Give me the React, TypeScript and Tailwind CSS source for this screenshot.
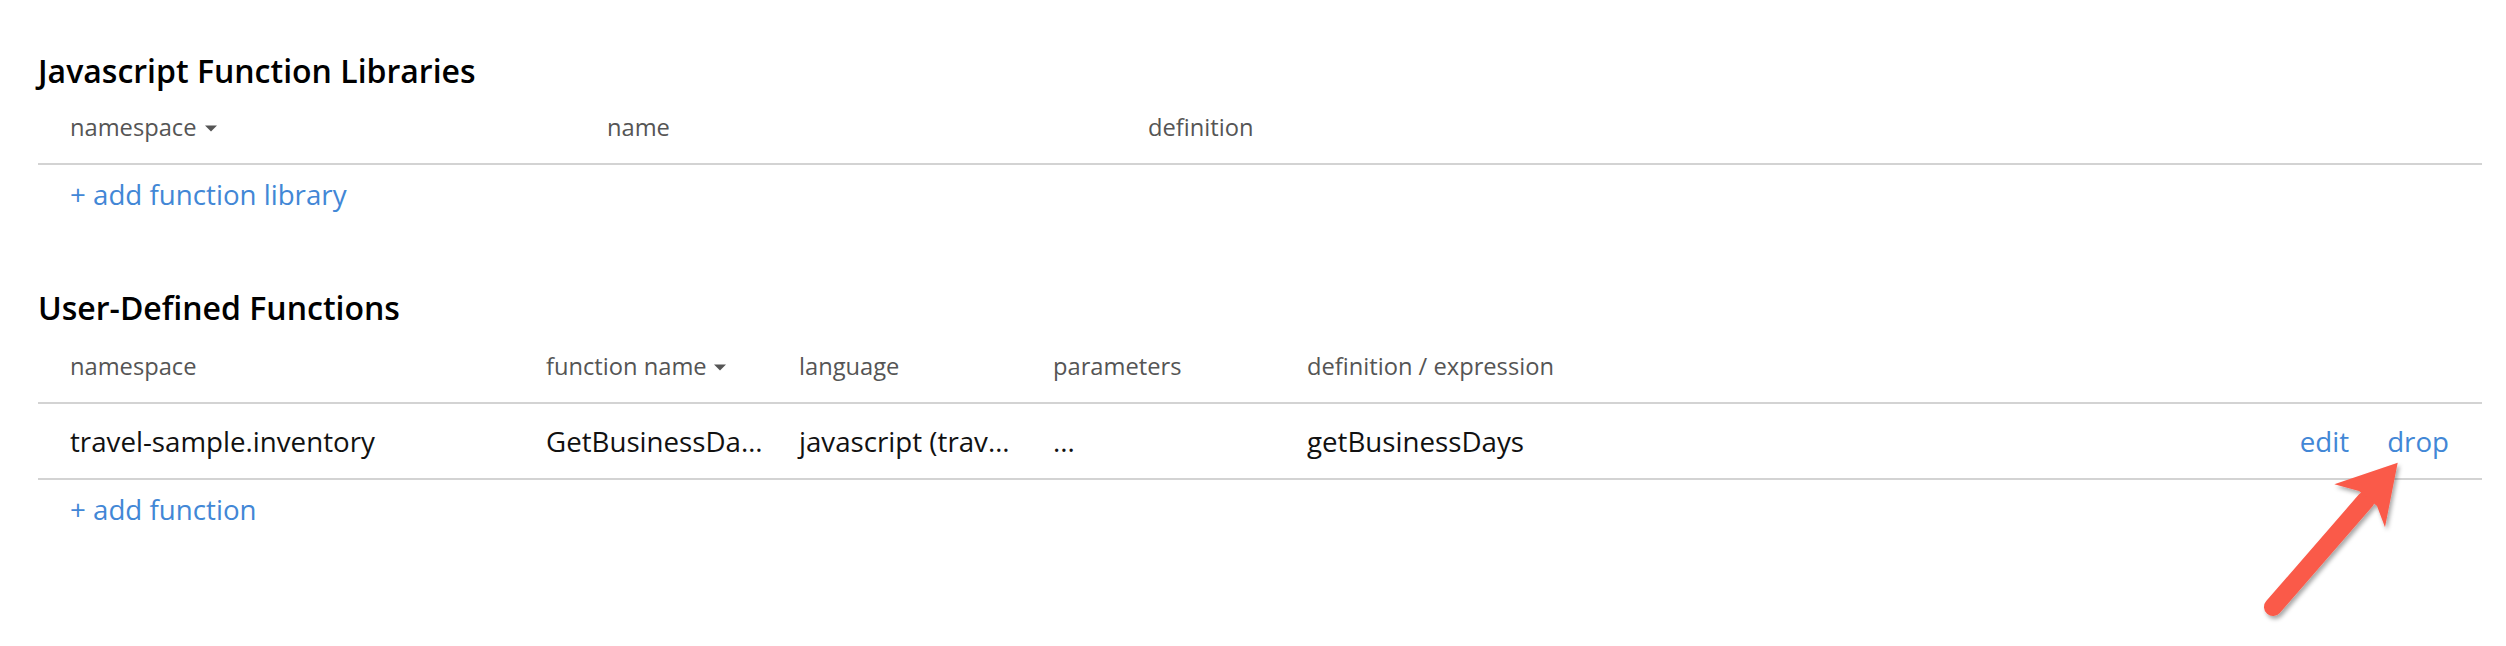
import React from "react";

const LINK = "text-[#4287d6] hover:underline cursor-pointer";

function SortCaret({ className = "" }: { className?: string }) {
  return (
    <svg width="12" height="7" viewBox="0 0 12 7" className={"shrink-0 " + className}>
      <path d="M0 0.5h12L6 6.5z" fill="#555" />
    </svg>
  );
}

function HeaderCell({ children, sorted }: { children: React.ReactNode; sorted?: boolean }) {
  return (
    <div className="flex items-center h-[32px] pl-[32px] min-w-0">
      <span className="whitespace-nowrap">{children}</span>
      {sorted && <SortCaret className="ml-[8px]" />}
    </div>
  );
}

function Cell({ children }: { children: React.ReactNode }) {
  return <div className="pl-[32px] pr-[2px] pt-[18px] truncate min-w-0">{children}</div>;
}

function DropArrow() {
  // red annotation arrow pointing at "drop"
  return (
    <svg
      width="180"
      height="180"
      viewBox="0 0 180 180"
      className="absolute left-[2240px] top-[450px] pointer-events-none"
    >
      <defs>
        <filter id="arrowShadow" x="-20%" y="-20%" width="140%" height="140%">
          <feDropShadow dx="2" dy="3" stdDeviation="2" floodColor="#000" floodOpacity="0.35" />
        </filter>
      </defs>
      <g filter="url(#arrowShadow)" fill="#fa5a4a" stroke="#fa5a4a">
        <line x1="33" y1="157" x2="126" y2="50" strokeWidth="18" strokeLinecap="round" />
        <path d="M157.7 12.7 L94.3 34.3 L119 41 L137 56 L145 77.3 Z" strokeWidth="0" />
      </g>
    </svg>
  );
}

export default function App() {
  return (
    <div className="relative min-h-[646px] w-full bg-white font-['Open_Sans',sans-serif] pl-[38px] pr-[24px] pt-[49px]">
      {/* Javascript Function Libraries */}
      <section>
        <h2 className="text-[32px] leading-[44px] font-semibold text-black">Javascript Function Libraries</h2>
        <div className="mt-[19px] grid grid-cols-[537px_541px_1fr] h-[53px] border-b-2 border-[#d3d3d3] text-[23.7px] text-[#555]">
          <HeaderCell sorted>namespace</HeaderCell>
          <HeaderCell>name</HeaderCell>
          <HeaderCell>definition</HeaderCell>
        </div>
        <div className="mt-[10px] pl-[32px] text-[27.7px] leading-[38px]">
          <span className={LINK}>+ add function library</span>
        </div>
      </section>

      {/* User-Defined Functions */}
      <section className="mt-[73px]">
        <h2 className="text-[32px] leading-[44px] font-semibold text-black">User-Defined Functions</h2>
        <div className="mt-[21px] grid grid-cols-[476px_253px_254px_254px_1fr] h-[53px] border-b-2 border-[#d3d3d3] text-[23.7px] text-[#555]">
          <HeaderCell>namespace</HeaderCell>
          <div className="flex items-center h-[32px] pl-[32px]">
            <span className="whitespace-nowrap">function name</span>
            <SortCaret className="ml-[7px]" />
          </div>
          <HeaderCell>language</HeaderCell>
          <HeaderCell>parameters</HeaderCell>
          <HeaderCell>definition / expression</HeaderCell>
        </div>
        <div className="grid grid-cols-[476px_253px_254px_254px_1fr] h-[76px] border-b-2 border-[#d3d3d3] text-[27.7px] leading-[38px] text-[#111]">
          <Cell>travel-sample.inventory</Cell>
          <Cell>GetBusinessDays</Cell>
          <div className="pl-[32px] pr-[10px] pt-[18px] truncate min-w-0">javascript (travel-sample/inventory/utils)</div>
          <div className="pl-[32px] pt-[18px] whitespace-nowrap">...</div>
          <div className="flex pt-[18px] pl-[32px] pr-[33px] min-w-0">
            <span className="truncate">getBusinessDays</span>
            <div className="ml-auto flex gap-[38px] whitespace-nowrap">
              <span className={LINK}>edit</span>
              <span className={LINK}>drop</span>
            </div>
          </div>
        </div>
        <div className="mt-[10px] pl-[32px] text-[27.7px] leading-[38px]">
          <span className={LINK}>+ add function</span>
        </div>
      </section>

      <DropArrow />
    </div>
  );
}
